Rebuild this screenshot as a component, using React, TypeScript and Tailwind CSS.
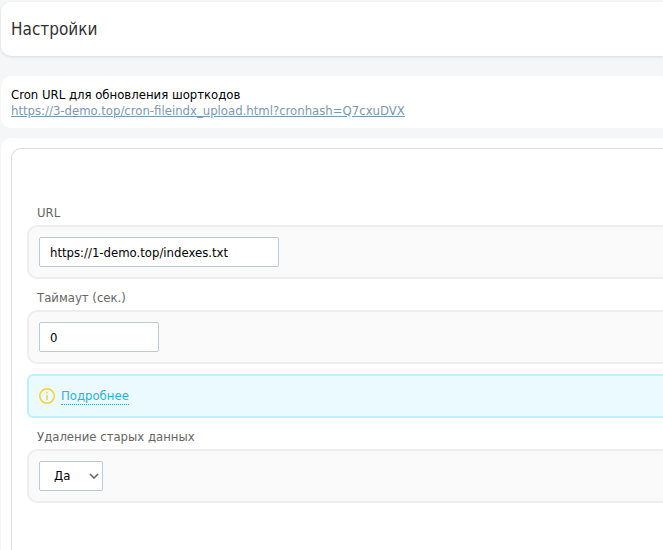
import type { ReactNode } from "react";

const CRON_URL = "https://3-demo.top/cron-fileindx_upload.html?cronhash=Q7cxuDVX";

type FieldProps = {
  id: string;
  label: string;
  children: ReactNode;
};

function Field({ id, label, children }: FieldProps) {
  return (
    <div className="pt-[11px]">
      <label htmlFor={id} className="block pl-[10px] leading-4 text-[#666]">
        {label}
      </label>
      <div className="mt-1 flex rounded-l-[10px] border-2 border-r-0 border-[#eee] bg-[#fafafa] p-[10px]">
        {children}
      </div>
    </div>
  );
}

function InfoIcon() {
  return (
    <svg viewBox="0 0 16 16" className="size-4 shrink-0" fill="none" aria-hidden="true">
      <circle cx="8" cy="8" r="7.25" stroke="#fbd02f" strokeWidth="1.5" />
      <path d="M8 7v5M8 4v1.5" stroke="#fbd02f" strokeWidth="1.5" />
    </svg>
  );
}

export default function App() {
  return (
    <div className="flex min-h-screen flex-col bg-[#f5f6f8] pt-[2px] pl-px font-['DejaVu_Sans_Condensed','Noto_Sans',sans-serif] text-[13px] text-black">
      <header className="rounded-l-[10px] bg-white px-[10px] py-[15px] shadow-[0_1px_3px_#d3dbe2]">
        <h1 className="text-[17px] leading-6 text-[#333]">Настройки</h1>
      </header>

      <section className="mt-5 rounded-l-[10px] bg-white px-[10px] pt-[11px] pb-[9px] leading-4">
        <p>Cron URL для обновления шорткодов</p>
        <a href={CRON_URL} className="block text-[#7b98b2] underline">
          {CRON_URL}
        </a>
      </section>

      <main className="mt-[10px] flex grow flex-col rounded-tl-[10px] bg-white pt-[10px] pl-[10px]">
        <form className="grow rounded-tl-[10px] border-t border-l border-[#ddd] pt-[45px] pl-[15px]">
          <Field id="url" label="URL">
            <input
              id="url"
              type="text"
              defaultValue="https://1-demo.top/indexes.txt"
              className="h-[30px] w-60 rounded-[2px] border border-[#b9cad9] bg-white px-[10px]"
            />
          </Field>
          <Field id="timeout" label="Таймаут (сек.)">
            <input
              id="timeout"
              type="text"
              defaultValue="0"
              className="h-[30px] w-[120px] rounded-[2px] border border-[#b9cad9] bg-white px-[10px]"
            />
          </Field>

          <div className="mt-[10px] flex h-11 items-center gap-[6px] rounded-l-[6px] border-2 border-r-0 border-[#c0f0ff] bg-[#eafaff] px-[10px]">
            <InfoIcon />
            <button type="button" className="border-b border-dotted border-[#27b6d6] leading-4 text-[#27b6d6]">
              Подробнее
            </button>
          </div>

          <Field id="cleanup" label="Удаление старых данных">
            <div className="relative">
              <select
                id="cleanup"
                defaultValue="1"
                className="h-[30px] w-16 appearance-none rounded-[2px] border border-[#b9cad9] bg-white px-[14px]"
              >
                <option value="1">Да</option>
                <option value="0">Нет</option>
              </select>
              <svg
                viewBox="0 0 10 6"
                className="pointer-events-none absolute top-3 right-1 h-[6px] w-[10px]"
                fill="none"
                aria-hidden="true"
              >
                <path d="M1 1l4 4 4-4" stroke="#666" strokeWidth="1.6" />
              </svg>
            </div>
          </Field>
        </form>
      </main>
    </div>
  );
}
